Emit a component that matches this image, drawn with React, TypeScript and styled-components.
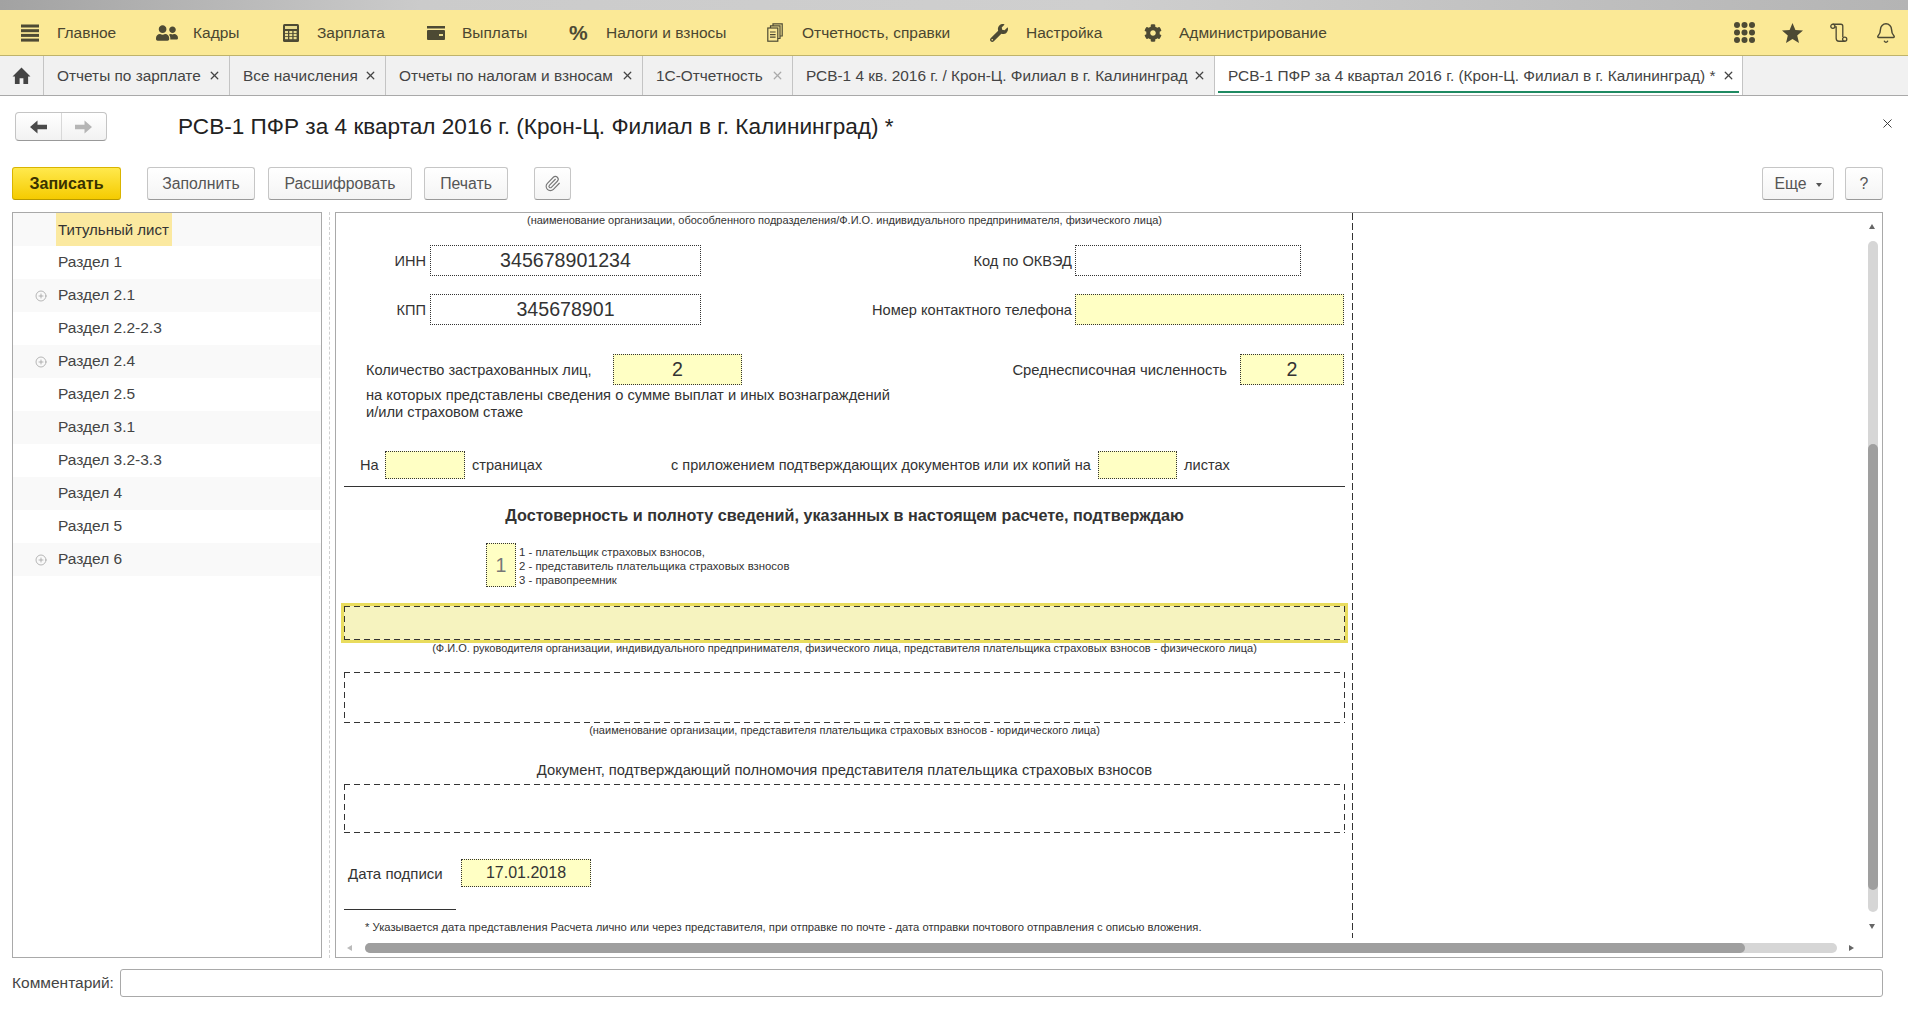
import React from "react";
import styled, { createGlobalStyle, css } from "styled-components";
import { FaCog, FaUserFriends, FaWrench } from "react-icons/fa";
import { Bell, CirclePlus, Paperclip, X } from "lucide-react";

const GlobalStyle = createGlobalStyle`
  html, body {
    margin: 0;
    padding: 0;
    background: #fff;
    font-family: "Liberation Sans", Arial, sans-serif;
    color: #333;
  }
`;

const Percent = styled.span`
  font-size: 21px;
  font-weight: 700;
  color: #4d4a34;
`;

const HamburgerIcon = () => (
  <svg width="18" height="18" viewBox="0 0 18 18" fill="#4d4a34">
    <rect x="0" y="0.5" width="18" height="3" />
    <rect x="0" y="5.2" width="18" height="3" />
    <rect x="0" y="9.9" width="18" height="3" />
    <rect x="0" y="14.6" width="18" height="3" />
  </svg>
);

const CalcIcon = () => (
  <svg width="16" height="18" viewBox="0 0 16 18">
    <rect x="0" y="0" width="16" height="18" rx="1.5" fill="#4d4a34" />
    <rect x="2" y="2" width="12" height="3" fill="#e9dc8f" />
    {[7, 10, 13].map((y) =>
      [2, 6.3, 10.6].map((x) => <rect key={`${x}-${y}`} x={x} y={y} width="3" height="2.2" fill="#e9dc8f" />)
    )}
  </svg>
);

const WalletIcon = () => (
  <svg width="18" height="14" viewBox="0 0 18 14">
    <rect x="0" y="0" width="18" height="2.5" fill="#4d4a34" />
    <rect x="0" y="4" width="18" height="10" rx="1" fill="#4d4a34" />
    <rect x="12" y="8" width="4" height="2" fill="#e9dc8f" />
  </svg>
);

const DocsIcon = () => (
  <svg width="16" height="19" viewBox="0 0 16 19" fill="none" stroke="#4d4a34" strokeWidth="1.2">
    <rect x="0.8" y="5" width="10" height="13.2" />
    <path d="M3.5 5V2.8H13V15.5H10.8M6 2.8V0.8H15.2V13H13" />
    <path d="M3 9h5.6M3 11.6h5.6M3 14.2h5.6" />
  </svg>
);

const AppsIcon = () => (
  <svg width="21" height="21" viewBox="0 0 21 21" fill="#4d4a34">
    {[3, 10.5, 18].map((y) =>
      [3, 10.5, 18].map((x) => <circle key={`${x}-${y}`} cx={x} cy={y} r="3" />)
    )}
  </svg>
);

const StarIcon = () => (
  <svg width="21" height="20" viewBox="0 0 21 20" fill="#4d4a34">
    <polygon points="10.5,0 13.4,7 21,7.6 15.2,12.5 17,20 10.5,16 4,20 5.8,12.5 0,7.6 7.6,7" />
  </svg>
);

const ScrollIcon = () => (
  <svg width="18" height="20" viewBox="0 0 19 20" fill="none" stroke="#4d4a34" strokeWidth="1.4">
    <circle cx="3" cy="3" r="2.2" />
    <circle cx="15.5" cy="16.5" r="2.2" />
    <path d="M3 0.8H11.5C12.8 0.8 13.5 1.6 13.5 3V14.3M5.2 3.5H6.5V15.5C6.5 17.5 7.7 18.7 9.5 18.7H15.5" />
  </svg>
);

const HomeIcon = () => (
  <svg width="19" height="17" viewBox="0 0 19 18" fill="#444">
    <path d="M9.5 0.5L19 10H16.5V18H11.5V12H7.5V18H2.5V10H0Z" />
  </svg>
);

const NavArrow = ({ flip, color }: { flip?: boolean; color: string }) => (
  <svg width="17" height="14" viewBox="0 0 17 14" fill={color} transform={flip ? "scale(-1 1)" : undefined}>
    <path d="M0 7L7.5 0.5V4.8H17V9.2H7.5V13.5Z" />
  </svg>
);

// w is the full slot of an item, offset is where its text starts
const menuItems: { label: string; icon: React.ReactNode; offset: number; w: number }[] = [
  { label: "Главное", icon: <HamburgerIcon />, offset: 36, w: 135 },
  { label: "Кадры", icon: <FaUserFriends size={22} color="#4d4a34" />, offset: 37, w: 127 },
  { label: "Зарплата", icon: <CalcIcon />, offset: 34, w: 144 },
  { label: "Выплаты", icon: <WalletIcon />, offset: 35, w: 142 },
  { label: "Налоги и взносы", icon: <Percent>%</Percent>, offset: 37, w: 198 },
  { label: "Отчетность, справки", icon: <DocsIcon />, offset: 35, w: 223 },
  { label: "Настройка", icon: <FaWrench size={18} color="#4d4a34" />, offset: 36, w: 154 },
  { label: "Администрирование", icon: <FaCog size={18} color="#4d4a34" />, offset: 35, w: 190 },
];

const tabs: { label: string; w: number; faded?: boolean }[] = [
  { label: "Отчеты по зарплате", w: 186 },
  { label: "Все начисления", w: 156 },
  { label: "Отчеты по налогам и взносам", w: 257 },
  { label: "1С-Отчетность", w: 150, faded: true },
  { label: "РСВ-1 4 кв. 2016 г. / Крон-Ц. Филиал в г. Калининград", w: 422 },
];

const sections: { label: string; expandable?: boolean; current?: boolean }[] = [
  { label: "Титульный лист", current: true },
  { label: "Раздел 1" },
  { label: "Раздел 2.1", expandable: true },
  { label: "Раздел 2.2-2.3" },
  { label: "Раздел 2.4", expandable: true },
  { label: "Раздел 2.5" },
  { label: "Раздел 3.1" },
  { label: "Раздел 3.2-3.3" },
  { label: "Раздел 4" },
  { label: "Раздел 5" },
  { label: "Раздел 6", expandable: true },
];

const App = () => {
  return (
    <Page>
      <GlobalStyle />
      <TopBand />
      <MenuBar>
        {menuItems.map((m) => (
          <MenuItem key={m.label} $w={m.w}>
            <MenuIcon $w={m.offset}>{m.icon}</MenuIcon>
            {m.label}
          </MenuItem>
        ))}
        <MenuTools>
          <AppsIcon />
          <StarIcon />
          <ScrollIcon />
          <Bell size={22} color="#4d4a34" strokeWidth={1.6} />
        </MenuTools>
      </MenuBar>
      <TabBar>
        <HomeTab>
          <HomeIcon />
        </HomeTab>
        {tabs.map((t) => (
          <Tab key={t.label} $w={t.w}>
            {t.label}
            <TabClose $faded={t.faded}>
              <X size={13} strokeWidth={2.4} />
            </TabClose>
          </Tab>
        ))}
        <ActiveTab>
          РСВ-1 ПФР за 4 квартал 2016 г. (Крон-Ц. Филиал в г. Калининград) *
          <TabClose>
            <X size={13} strokeWidth={2.4} />
          </TabClose>
        </ActiveTab>
      </TabBar>
      <TitleRow>
        <NavGroup>
          <NavButton>
            <NavArrow color="#4a4a4a" />
          </NavButton>
          <NavButton $off>
            <NavArrow flip color="#b5b5b5" />
          </NavButton>
        </NavGroup>
        <Title>РСВ-1 ПФР за 4 квартал 2016 г. (Крон-Ц. Филиал в г. Калининград) *</Title>
        <WindowClose>
          <X size={15} strokeWidth={1.5} />
        </WindowClose>
      </TitleRow>
      <ToolRow>
        <PrimaryButton>Записать</PrimaryButton>
        <Button $w={108} $ml={26}>Заполнить</Button>
        <Button $w={144} $ml={13}>Расшифровать</Button>
        <Button $w={84} $ml={12}>Печать</Button>
        <Button $w={37} $ml={26}>
          <Paperclip size={17} color="#777" strokeWidth={1.6} />
        </Button>
        <Button $w={72} $ml="auto">
          Еще
          <Caret />
        </Button>
        <Button $w={38} $ml={11}>?</Button>
      </ToolRow>
      <Main>
        <Tree>
          {sections.map((s) => (
            <TreeRow key={s.label}>
              <TreeToggle>{s.expandable && <CirclePlus size={12} color="#999" strokeWidth={1.4} />}</TreeToggle>
              <TreeLabel $current={s.current}>{s.label}</TreeLabel>
            </TreeRow>
          ))}
        </Tree>
        <Splitter />
        <FormPanel>
          <Sheet>
            <Caption $h={15}>
              (наименование организации, обособленного подразделения/Ф.И.О. индивидуального предпринимателя, физического лица)
            </Caption>
            <FormRow $top={17} $h={31}>
              <FieldLabel $w={82} $right>ИНН</FieldLabel>
              <Field $w={271} $ml={4} $size={19.6}>345678901234</Field>
              <FieldLabel $w={371} $right>Код по ОКВЭД</FieldLabel>
              <Field $w={226} $ml={3} />
            </FormRow>
            <FormRow $top={18} $h={31}>
              <FieldLabel $w={82} $right>КПП</FieldLabel>
              <Field $w={271} $ml={4} $size={19.6}>345678901</Field>
              <FieldLabel $w={371} $right>Номер контактного телефона</FieldLabel>
              <Field $w={269} $ml={3} $fill />
            </FormRow>
            <FormRow $top={29} $h={31} $pl={22}>
              <FieldLabel $w={247}>Количество застрахованных лиц,</FieldLabel>
              <Field $w={129} $fill $size={19.6}>2</Field>
              <FieldLabel $w={485} $right $size={14.85}>Среднесписочная численность</FieldLabel>
              <Field $w={104} $ml={13} $fill $size={19.6}>2</Field>
            </FormRow>
            <NoteLines>
              на которых представлены сведения о сумме выплат и иных вознаграждений
              <br />
              и/или страховом стаже
            </NoteLines>
            <FormRow $top={30} $h={28} $pl={16}>
              <FieldLabel $w={25}>На</FieldLabel>
              <Field $w={80} $fill />
              <FieldLabel $w={199} $ml={7}>страницах</FieldLabel>
              <FieldLabel $w={427} $size={14.5}>с приложением подтверждающих документов или их копий на</FieldLabel>
              <Field $w={79} $fill />
              <FieldLabel $ml={7}>листах</FieldLabel>
            </FormRow>
            <Rule />
            <Heading>Достоверность и полноту сведений, указанных в настоящем расчете, подтверждаю</Heading>
            <FormRow $top={17} $h={44} $pl={142}>
              <SignerField $w={30} $fill $size={19.6}>1</SignerField>
              <SignerTypes>
                1 - плательщик страховых взносов,
                <br />
                2 - представитель плательщика страховых взносов
                <br />3 - правопреемник
              </SignerTypes>
            </FormRow>
            <FocusFrame>
              <DashedBox $h={34} $fill />
            </FocusFrame>
            <Caption $h={14} $top={-2}>
              (Ф.И.О. руководителя организации, индивидуального предпринимателя, физического лица, представителя плательщика страховых взносов - физического лица)
            </Caption>
            <DashedBox $h={51} $top={17} />
            <Caption $h={14}>(наименование организации, представителя плательщика страховых взносов - юридического лица)</Caption>
            <DocTitle>Документ, подтверждающий полномочия представителя плательщика страховых взносов</DocTitle>
            <DashedBox $h={49} $top={4} />
            <FormRow $top={26} $h={28} $pl={4}>
              <FieldLabel $w={113} $size={15}>Дата подписи</FieldLabel>
              <Field $w={130} $fill $size={16}>17.01.2018</Field>
            </FormRow>
            <ShortRule />
            <Footnote>
              * Указывается дата представления Расчета лично или через представителя, при отправке по почте - дата отправки почтового отправления с описью вложения.
            </Footnote>
          </Sheet>
          <VTrack>
            <VThumb />
          </VTrack>
          <HTrack>
            <HThumb />
          </HTrack>
          <ArrowUp />
          <ArrowDown />
          <ArrowLeft />
          <ArrowRight />
        </FormPanel>
      </Main>
      <CommentRow>
        <CommentLabel>Комментарий:</CommentLabel>
        <CommentInput />
      </CommentRow>
    </Page>
  );
};

const dashedEdges = css`
  background-image: repeating-linear-gradient(90deg, #333 0 6px, transparent 6px 10px),
    repeating-linear-gradient(90deg, #333 0 6px, transparent 6px 10px),
    repeating-linear-gradient(180deg, #333 0 6px, transparent 6px 10px),
    repeating-linear-gradient(180deg, #333 0 6px, transparent 6px 10px);
  background-size: 100% 1px, 100% 1px, 1px 100%, 1px 100%;
  background-position: 0 0, 0 100%, 0 0, 100% 0;
  background-repeat: no-repeat;
`;

const Page = styled.div`
  width: 1908px;
  height: 1010px;
  display: flex;
  flex-direction: column;
  overflow: hidden;
  background: #fff;
`;
const TopBand = styled.div`
  height: 10px;
  flex: none;
  background: linear-gradient(90deg, #a2a2a2 0, #cbcbcb 420px, #cfcfcf 1100px, #b4b4b4 1908px);
`;
const MenuBar = styled.div`
  height: 46px;
  flex: none;
  box-sizing: border-box;
  border-bottom: 1px solid #bfb36b;
  background: #fbe996;
  display: flex;
  align-items: center;
  padding: 0 11px 0 21px;
`;
const MenuItem = styled.div<{ $w: number }>`
  width: ${(p) => p.$w}px;
  flex: none;
  display: flex;
  align-items: center;
  font-size: 15.5px;
  color: #4a4630;
  white-space: nowrap;
`;
const MenuIcon = styled.span<{ $w: number }>`
  width: ${(p) => p.$w}px;
  flex: none;
  display: flex;
  align-items: center;
`;
const MenuTools = styled.div`
  margin-left: auto;
  display: flex;
  align-items: center;
  gap: 27px;
`;
const TabBar = styled.div`
  height: 40px;
  flex: none;
  box-sizing: border-box;
  border-bottom: 1px solid #a9a9a9;
  background: #f1f1f1;
  display: flex;
`;
const HomeTab = styled.div`
  width: 44px;
  box-sizing: border-box;
  border-right: 1px solid #c4c4c4;
  display: flex;
  align-items: center;
  justify-content: center;
`;
const Tab = styled.div<{ $w: number }>`
  width: ${(p) => p.$w}px;
  box-sizing: border-box;
  border-right: 1px solid #c4c4c4;
  padding: 0 8px 0 13px;
  display: flex;
  align-items: center;
  justify-content: space-between;
  font-size: 15.4px;
  color: #444;
  white-space: nowrap;
`;
const ActiveTab = styled.div`
  width: 528px;
  height: 39px;
  position: relative;
  box-sizing: border-box;
  border-right: 1px solid #c4c4c4;
  background: #fff;
  padding: 0 7px 0 13px;
  display: flex;
  align-items: center;
  justify-content: space-between;
  font-size: 15.4px;
  color: #444;
  white-space: nowrap;
  &::after {
    content: "";
    position: absolute;
    left: 3px;
    right: 3px;
    bottom: 2px;
    height: 2px;
    background: #1f8a62;
  }
`;
const TabClose = styled.span<{ $faded?: boolean }>`
  display: flex;
  color: ${(p) => (p.$faded ? "#aaa" : "#444")};
`;
const TitleRow = styled.div`
  height: 45px;
  flex: none;
  box-sizing: border-box;
  padding: 16px 13px 0 15px;
  display: flex;
  align-items: flex-start;
`;
const NavGroup = styled.div`
  width: 92px;
  height: 29px;
  box-sizing: border-box;
  border: 1px solid #c4c4c4;
  border-bottom-color: #999;
  border-radius: 4px;
  background: linear-gradient(#fff, #f2f2f2);
  display: flex;
`;
const NavButton = styled.div<{ $off?: boolean }>`
  flex: 1;
  display: flex;
  align-items: center;
  justify-content: center;
  border-left: ${(p) => (p.$off ? "1px solid #d8d8d8" : "none")};
`;
const Title = styled.h1`
  margin: 0 0 0 71px;
  font-size: 22.6px;
  line-height: 29px;
  font-weight: 400;
  color: #222;
  white-space: nowrap;
`;
const WindowClose = styled.div`
  margin-left: auto;
  margin-top: 4px;
  display: flex;
  color: #333;
`;
const ToolRow = styled.div`
  height: 33px;
  flex: none;
  padding: 0 25px 0 12px;
  display: flex;
  margin-top: 26px;
`;
const Button = styled.div<{ $w: number; $ml: number | string }>`
  width: ${(p) => p.$w}px;
  margin-left: ${(p) => (typeof p.$ml === "number" ? `${p.$ml}px` : p.$ml)};
  box-sizing: border-box;
  border: 1px solid #c6c6c6;
  border-bottom-color: #9a9a9a;
  border-radius: 3px;
  background: linear-gradient(#fff, #f4f4f4);
  display: flex;
  align-items: center;
  justify-content: center;
  font-size: 15.8px;
  color: #555;
`;
const PrimaryButton = styled.div`
  width: 109px;
  box-sizing: border-box;
  border: 1px solid #d9b400;
  border-bottom-color: #b99a00;
  border-radius: 3px;
  background: linear-gradient(#ffe94d, #f5cb00);
  display: flex;
  align-items: center;
  justify-content: center;
  font-size: 16px;
  font-weight: 700;
  color: #3a3200;
`;
const Caret = styled.span`
  width: 0;
  height: 0;
  margin-left: 9px;
  margin-top: 2px;
  border-left: 3px solid transparent;
  border-right: 3px solid transparent;
  border-top: 4px solid #555;
`;
const Main = styled.div`
  height: 746px;
  flex: none;
  margin-top: 12px;
  padding: 0 25px 0 12px;
  display: flex;
`;
const Tree = styled.div`
  width: 310px;
  flex: none;
  box-sizing: border-box;
  border: 1px solid #a9a9a9;
`;
const TreeRow = styled.div`
  height: 33px;
  display: flex;
  align-items: stretch;
  color: #444;
  &:nth-child(odd) {
    background: #f9f9f9;
  }
`;
const TreeToggle = styled.span`
  width: 43px;
  padding-left: 22px;
  box-sizing: border-box;
  display: flex;
  align-items: center;
`;
const TreeLabel = styled.span<{ $current?: boolean }>`
  display: flex;
  align-items: center;
  padding: ${(p) => (p.$current ? "0 3px 0 2px" : "0 3px 2px 2px")};
  font-size: ${(p) => (p.$current ? "15px" : "15.5px")};
  background: ${(p) => (p.$current ? "#fbe9a0" : "transparent")};
  color: ${(p) => (p.$current ? "#333" : "#444")};
`;
const Splitter = styled.div`
  width: 13px;
  flex: none;
  &::after {
    content: "";
    display: block;
    width: 0;
    height: 100%;
    margin-left: 7px;
    border-left: 1px dashed #d0d0d0;
  }
`;
const FormPanel = styled.div`
  flex: 1;
  position: relative;
  box-sizing: border-box;
  border: 1px solid #a9a9a9;
  overflow: hidden;
`;
const Sheet = styled.div`
  width: 1017px;
  height: 725px;
  box-sizing: border-box;
  padding: 0 8px;
  background: repeating-linear-gradient(180deg, #333 0 7px, transparent 7px 10px) right top / 1px 100% no-repeat;
  font-size: 14.6px;
  color: #333;
`;
const Caption = styled.div<{ $h: number; $top?: number }>`
  height: ${(p) => p.$h}px;
  line-height: ${(p) => p.$h}px;
  margin-top: ${(p) => p.$top ?? 0}px;
  text-align: center;
  font-size: 11px;
  white-space: nowrap;
  color: #333;
`;
const FormRow = styled.div<{ $top: number; $h: number; $pl?: number }>`
  height: ${(p) => p.$h}px;
  margin-top: ${(p) => p.$top}px;
  padding-left: ${(p) => p.$pl ?? 0}px;
  display: flex;
  align-items: center;
`;
const FieldLabel = styled.span<{ $w?: number; $ml?: number; $right?: boolean; $size?: number }>`
  flex: none;
  width: ${(p) => (p.$w ? `${p.$w}px` : "auto")};
  margin-left: ${(p) => p.$ml ?? 0}px;
  text-align: ${(p) => (p.$right ? "right" : "left")};
  font-size: ${(p) => (p.$size ? `${p.$size}px` : "inherit")};
  white-space: nowrap;
`;
const Field = styled.div<{ $w: number; $ml?: number; $fill?: boolean; $size?: number }>`
  flex: none;
  width: ${(p) => p.$w}px;
  height: 100%;
  margin-left: ${(p) => p.$ml ?? 0}px;
  box-sizing: border-box;
  border: 1px dotted #333;
  background: ${(p) => (p.$fill ? "#ffffc4" : "#fff")};
  display: flex;
  align-items: center;
  justify-content: center;
  font-size: ${(p) => p.$size ?? 14.6}px;
`;
const SignerField = styled(Field)`
  color: #777;
`;
const NoteLines = styled.div`
  margin-top: 2px;
  padding-left: 22px;
  font-size: 14.7px;
  line-height: 17px;
  white-space: nowrap;
`;
const Rule = styled.div`
  height: 1px;
  margin-top: 7px;
  background: #333;
`;
const Heading = styled.div`
  height: 22px;
  margin-top: 17px;
  line-height: 22px;
  text-align: center;
  font-size: 16.2px;
  font-weight: 700;
  white-space: nowrap;
`;
const SignerTypes = styled.div`
  margin-left: 3px;
  padding-top: 2px;
  font-size: 11.35px;
  line-height: 14px;
  white-space: nowrap;
`;
const FocusFrame = styled.div`
  margin: 16px -3px 0;
  height: 40px;
  box-sizing: border-box;
  border: 3px solid #e9dc5e;
  background: #f6f3bf;
`;
const DashedBox = styled.div<{ $h: number; $top?: number; $fill?: boolean }>`
  height: ${(p) => p.$h}px;
  margin-top: ${(p) => p.$top ?? 0}px;
  box-sizing: border-box;
  background-color: ${(p) => (p.$fill ? "#f6f3bf" : "#fff")};
  ${dashedEdges}
`;
const DocTitle = styled.div`
  height: 20px;
  margin-top: 23px;
  line-height: 20px;
  text-align: center;
  font-size: 14.75px;
  white-space: nowrap;
`;
const ShortRule = styled.div`
  width: 112px;
  height: 1px;
  margin-top: 22px;
  background: #333;
`;
const Footnote = styled.div`
  height: 14px;
  margin-top: 10px;
  padding-left: 21px;
  line-height: 14px;
  font-size: 11.25px;
  white-space: nowrap;
`;
const VTrack = styled.div`
  position: absolute;
  left: 1532px;
  top: 28px;
  width: 10px;
  height: 671px;
  border-radius: 5px;
  background: #d6d6d6;
`;
const VThumb = styled.div`
  position: absolute;
  top: 203px;
  width: 10px;
  height: 446px;
  border-radius: 5px;
  background: #9f9f9f;
`;
const HTrack = styled.div`
  position: absolute;
  left: 29px;
  top: 730px;
  width: 1472px;
  height: 10px;
  border-radius: 5px;
  background: #d6d6d6;
`;
const HThumb = styled.div`
  width: 1380px;
  height: 10px;
  border-radius: 5px;
  background: #9f9f9f;
`;
const Arrow = styled.div`
  position: absolute;
  width: 0;
  height: 0;
  border-style: solid;
  border-color: transparent;
`;
const ArrowUp = styled(Arrow)`
  left: 1533px;
  top: 11px;
  border-width: 0 3px 5px;
  border-bottom-color: #666;
`;
const ArrowDown = styled(Arrow)`
  left: 1533px;
  top: 711px;
  border-width: 5px 3px 0;
  border-top-color: #666;
`;
const ArrowLeft = styled(Arrow)`
  left: 11px;
  top: 732px;
  border-width: 3px 5px 3px 0;
  border-right-color: #bbb;
`;
const ArrowRight = styled(Arrow)`
  left: 1513px;
  top: 732px;
  border-width: 3px 0 3px 5px;
  border-left-color: #666;
`;
const CommentRow = styled.div`
  height: 28px;
  flex: none;
  margin-top: 11px;
  padding: 0 25px 0 12px;
  display: flex;
  align-items: center;
`;
const CommentLabel = styled.span`
  width: 108px;
  flex: none;
  font-size: 15.5px;
  color: #444;
  white-space: nowrap;
`;
const CommentInput = styled.div`
  flex: 1;
  height: 28px;
  box-sizing: border-box;
  border: 1px solid #a9a9a9;
  border-radius: 3px;
`;

export default App;
